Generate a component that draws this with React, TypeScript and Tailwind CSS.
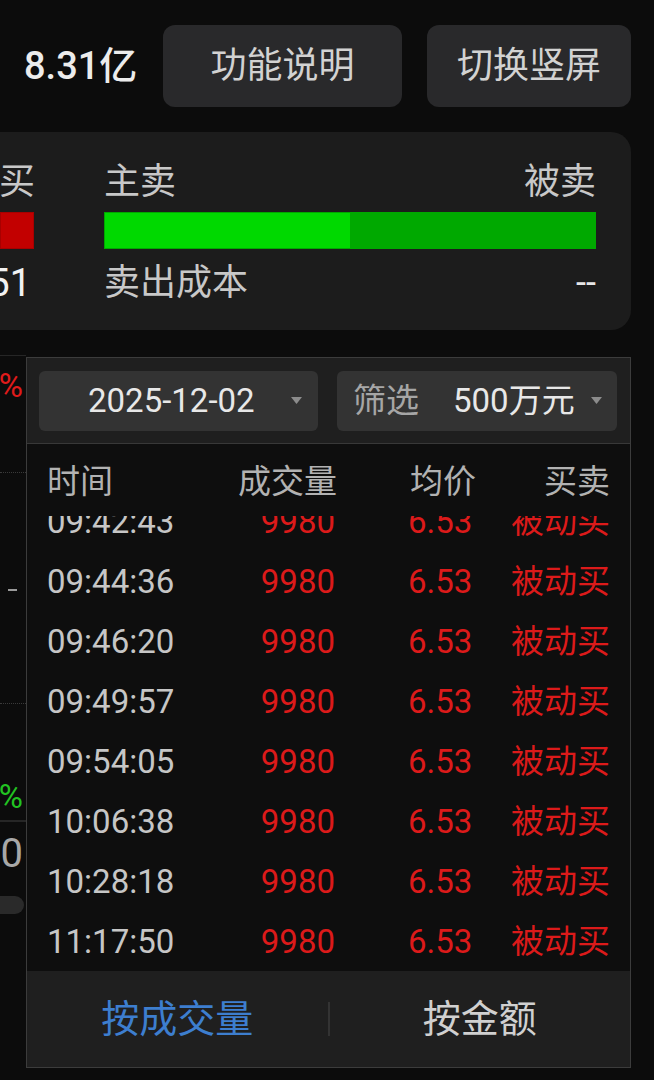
import React from "react";

const rows = [
  "09:42:43",
  "09:44:36",
  "09:46:20",
  "09:49:57",
  "09:54:05",
  "10:06:38",
  "10:28:18",
  "11:17:50",
];

function Caret() {
  return (
    <svg width="11" height="7" viewBox="0 0 11 7" className="shrink-0">
      <polygon points="0,0 11,0 5.5,7" fill="#8c8c8c" />
    </svg>
  );
}

export default function App() {
  return (
    <div
      className="relative w-[654px] h-[1080px] overflow-hidden bg-[#0c0c0c]"
      style={{ fontFamily: 'Roboto, "Noto Sans CJK SC", sans-serif' }}
    >
      {/* top row */}
      <div className="mt-[25px] flex h-[82px] items-center">
        <div className="w-[163px] pl-[24px] text-[38px] leading-[44px] font-medium text-[#ececec]">
          8.31亿
        </div>
        <div className="flex h-[82px] w-[239px] items-center justify-center rounded-[12px] bg-[#29292b] text-[36px] leading-[40px] text-[#d2d2d2]">
          功能说明
        </div>
        <div className="ml-[25px] flex h-[82px] w-[204px] items-center justify-center rounded-[12px] bg-[#29292b] text-[36px] leading-[40px] text-[#d2d2d2]">
          切换竖屏
        </div>
      </div>

      {/* card */}
      <div className="mt-[25px] flex h-[198px] w-[631px] rounded-r-[20px] bg-[#1c1c1c]">
        <div className="flex w-[34px] flex-col items-end pt-[30px]">
          <div className="text-[36px] leading-[40px] text-[#c8c8c8] -mr-[1px]">买</div>
          <div className="mt-[10px] h-[37px] w-[34px] border border-[#a80000] bg-[#c20000]" />
          <div className="mt-[14px] pr-[3px] text-[38px] leading-[40px] text-[#f2f2f2]">51</div>
        </div>
        <div className="ml-[70px] flex w-[492px] flex-col pt-[30px]">
          <div className="flex justify-between text-[36px] leading-[40px] text-[#c8c8c8]">
            <span>主卖</span>
            <span>被卖</span>
          </div>
          <div className="mt-[10px] flex h-[37px] w-full border border-[#00a800]">
            <div className="h-full w-1/2 bg-[#00d900]" />
            <div className="h-full w-1/2 bg-[#00a900]" />
          </div>
          <div className="mt-[14px] flex justify-between text-[36px] leading-[40px] text-[#c8c8c8]">
            <span>卖出成本</span>
            <span className="text-[#e6e6e6]">--</span>
          </div>
        </div>
      </div>

      {/* chart strip behind the popup */}
      <div className="mt-[25px] w-[26px] border-t border-[#262626]">
        <div className="mt-[11px] flex h-[38px] items-center justify-end pr-[3px] text-[33px] leading-[38px] text-[#e01b1b]">
          %
        </div>
        <div className="mt-[67px] border-t border-dotted border-[#3a3a3a]" />
        <div className="mt-[116px] ml-[8px] h-[2px] w-[9px] bg-[#9a9a9a]" />
        <div className="mt-[112px] border-t border-dotted border-[#3a3a3a]" />
        <div className="mt-[74px] flex h-[38px] items-center justify-end pr-[3px] text-[33px] leading-[38px] text-[#22c322]">
          %
        </div>
        <div className="mt-[4px] border-t-2 border-[#262626]" />
        <div className="mt-[10px] flex h-[44px] items-center justify-end pr-[3px] text-[40px] leading-[44px] text-[#a8a8a8]">
          0
        </div>
        <div className="mt-[20px] h-[18px] w-[24px] rounded-r-full bg-[#2a2a2a]" />
      </div>

      {/* popup panel */}
      <div className="absolute left-[26px] top-[357px] flex h-[711px] w-[605px] flex-col border border-[#3c3c3c] bg-[#0e0e0e]">
        <div className="flex h-[86px] shrink-0 items-center gap-[19px] border-b border-[#383838] bg-[#1f1f1f] px-[12px]">
          <div className="flex h-[60px] w-[279px] items-center justify-between rounded-[6px] bg-[#333333] pl-[49px] pr-[16px]">
            <span className="text-[33px] leading-[38px] text-[#e8e8e8]">2025-12-02</span>
            <Caret />
          </div>
          <div className="flex h-[60px] w-[280px] items-center rounded-[6px] bg-[#333333] pl-[16px] pr-[15px]">
            <span className="text-[33px] leading-[38px] text-[#a6a6a6]">筛选</span>
            <span className="ml-[34px] text-[33px] leading-[38px] text-[#e8e8e8]">500万元</span>
            <span className="ml-auto">
              <Caret />
            </span>
          </div>
        </div>

        <div className="flex h-[72px] shrink-0 items-center px-[20px] pt-[3px] text-[33px] leading-[38px] text-[#b2b2b2]">
          <div className="w-[160px]">时间</div>
          <div className="w-[130px] text-right">成交量</div>
          <div className="w-[140px] pl-[73px]">均价</div>
          <div className="flex-1 text-right">买卖</div>
        </div>

        <div className="h-[455px] shrink-0 overflow-hidden">
          <div className="-mt-[24px]">
            {rows.map((t) => (
              <div
                key={t}
                className="flex h-[60px] items-center px-[20px] text-[33px] leading-[38px]"
              >
                <div className="w-[160px] text-[#c6c6c6]">{t}</div>
                <div className="w-[128px] text-right text-[#dc1a1a]">9980</div>
                <div className="w-[142px] pl-[73px] text-[#dc1a1a]">6.53</div>
                <div className="flex-1 text-right text-[#dc1a1a]">被动买</div>
              </div>
            ))}
          </div>
        </div>

        <div className="flex flex-1 items-center bg-[#1f1f1f]">
          <div className="flex flex-1 justify-center text-[38px] leading-[44px] text-[#3d7ecf]">
            按成交量
          </div>
          <div className="h-[34px] w-[2px] bg-[#333333]" />
          <div className="flex flex-1 justify-center text-[38px] leading-[44px] text-[#d0d0d0]">
            按金额
          </div>
        </div>
      </div>
    </div>
  );
}
